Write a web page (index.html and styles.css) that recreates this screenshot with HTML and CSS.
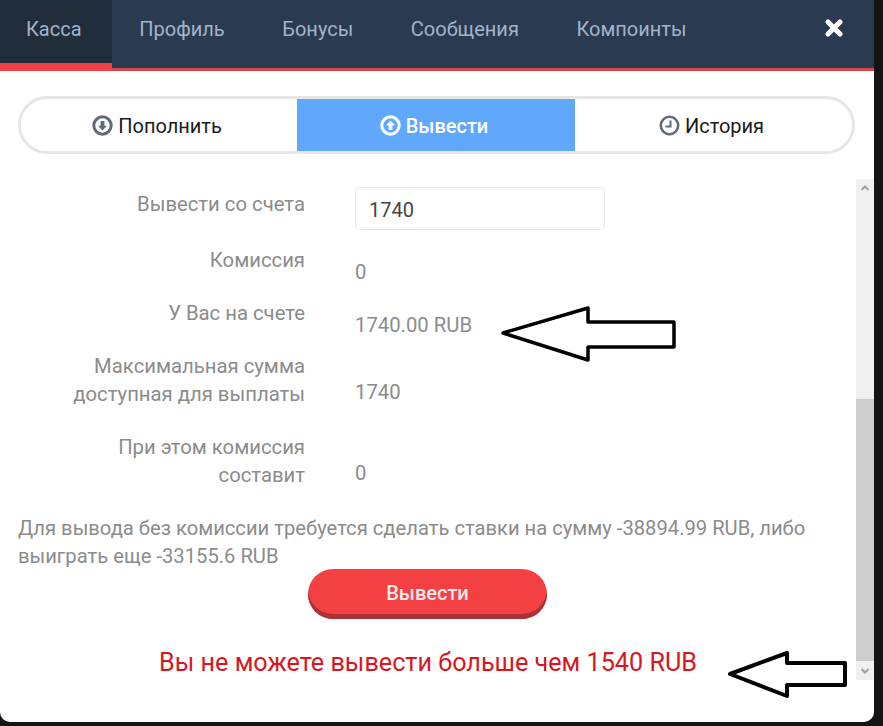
FILE: index.html
```html
<!DOCTYPE html>
<html lang="ru">
<head>
  <meta charset="UTF-8">
  <title>Касса</title>
  <link rel="stylesheet" href="styles.css">
</head>
<body>

<div class="modal">
  <div class="modal-head">
    <a class="head-tab active">Касса</a>
    <a class="head-tab">Профиль</a>
    <a class="head-tab">Бонусы</a>
    <a class="head-tab">Сообщения</a>
    <a class="head-tab">Компоинты</a>
    <svg class="close-icon" width="18" height="18" viewBox="0 0 18 18">
      <path d="M3 3 L15 15 M15 3 L3 15" stroke="#fff" stroke-width="5" stroke-linecap="round"/>
    </svg>
  </div>

  <div class="switcher">
    <div class="switch-item">
      <svg class="switch-icon" width="21" height="21" viewBox="0 0 21 21">
        <circle cx="10.5" cy="10.5" r="8.7" fill="none" stroke="#5f6b78" stroke-width="3"/>
        <path d="M10.5 15.6 L6 10.8 H8.6 V6 H12.4 V10.8 H15 Z" fill="#5f6b78"/>
      </svg>
      <span class="switch-text">Пополнить</span>
    </div>
    <div class="switch-item current">
      <svg class="switch-icon" width="21" height="21" viewBox="0 0 21 21">
        <circle cx="10.5" cy="10.5" r="8.7" fill="none" stroke="#fff" stroke-width="3"/>
        <path d="M10.5 5.4 L15 10.2 H12.4 V15 H8.6 V10.2 H6 Z" fill="#fff"/>
      </svg>
      <span class="switch-text">Вывести</span>
    </div>
    <div class="switch-item">
      <svg class="switch-icon" width="21" height="21" viewBox="0 0 21 21">
        <circle cx="10.5" cy="10.5" r="8.7" fill="none" stroke="#5f6b78" stroke-width="2.6"/>
        <path d="M11.5 5.5 V11.5 H6.5" fill="none" stroke="#5f6b78" stroke-width="2"/>
      </svg>
      <span class="switch-text">История</span>
    </div>
  </div>

  <div class="scroll-wrap">
    <div class="scroll-content">
      <div class="form-row first">
        <div class="form-label">Вывести со счета</div>
        <input class="amount-input" type="text" value="1740">
      </div>
      <div class="form-row">
        <div class="form-label">Комиссия</div>
        <div class="form-value">0</div>
      </div>
      <div class="form-row">
        <div class="form-label">У Вас на счете</div>
        <div class="form-value">1740.00 RUB</div>
      </div>
      <div class="form-row tall">
        <div class="form-label">Максимальная сумма доступная для выплаты</div>
        <div class="form-value">1740</div>
      </div>
      <div class="form-row tall">
        <div class="form-label">При этом комиссия составит</div>
        <div class="form-value">0</div>
      </div>
      <p class="note">Для вывода без комиссии требуется сделать ставки на сумму -38894.99 RUB, либо выиграть еще -33155.6 RUB</p>
      <button class="submit-btn" type="button">Вывести</button>
      <div class="error-text">Вы не можете вывести больше чем 1540 RUB</div>
    </div>

    <div class="scrollbar">
      <svg class="scroll-arrow" width="18" height="19" viewBox="0 0 18 19">
        <path d="M5.5 11 L9 7.5 L12.5 11" fill="none" stroke="#a0a0a0" stroke-width="2"/>
      </svg>
      <div class="scroll-space"></div>
      <div class="scroll-thumb"></div>
      <svg class="scroll-arrow" width="18" height="19" viewBox="0 0 18 19">
        <path d="M5.5 8 L9 11.5 L12.5 8" fill="none" stroke="#a0a0a0" stroke-width="2"/>
      </svg>
    </div>
  </div>

  <!-- arrows drawn on top of the screenshot -->
  <svg class="marks" width="883" height="726" viewBox="0 0 883 726">
    <polygon points="503,333 588,308 588,322 674,322 674,347 588,347 588,360" fill="none" stroke="#000" stroke-width="3.5" stroke-linejoin="round"/>
    <polygon points="730,674 787,653 787,663 845,663 845,685 787,685 787,696" fill="none" stroke="#000" stroke-width="4" stroke-linejoin="round"/>
  </svg>
</div>

</body>
</html>
```

FILE: styles.css
```css
html, body {
  margin: 0;
  height: 100%;
}

body {
  background-color: #141414;
  font-family: Roboto, "Liberation Sans", sans-serif;
  overflow: hidden;
}

.modal {
  position: relative;
  width: 874px;
  height: 722px;
  background-color: #fff;
  border-radius: 0 0 10px 10px;
}

.modal-head {
  display: flex;
  height: 68px;
  background-color: #2a3a50;
  border-bottom: 3px solid #d5494e;
  font-size: 20px;
}

.head-tab {
  padding: 19px 28.8px 0;
  color: #a3b3c9;
  line-height: 21px;
}

.head-tab.active {
  height: 44px;
  padding-left: 26px;
  padding-right: 30px;
  margin-right: -1px;
  background-color: #222d3c;
  border-bottom: 8px solid #f04246;
}

.close-icon {
  margin: 19px 31px 0 auto;
}

.switcher {
  display: grid;
  grid-template-columns: 276px 278px 1fr;
  height: 52px;
  margin: 25px 19px 25px 18px;
  border: 3px solid #e6e6e6;
  border-radius: 29px;
  overflow: hidden;
  font-size: 20px;
  color: #1a1a1a;
}

.switch-item {
  display: flex;
  justify-content: center;
  align-items: center;
  gap: 5px;
  padding-right: 4px;
}

.switch-text {
  padding-top: 2px;
}

.switch-item.current {
  background-color: #60a8fb;
  color: #fff;
  font-weight: 500;
}

.scroll-wrap {
  display: flex;
  height: 501px;
}

.scroll-content {
  flex: 1;
  padding: 8px 18px 0;
  font-size: 20.3px;
  line-height: 28px;
  color: #8b8b8b;
}

.form-row {
  display: grid;
  grid-template-columns: 287px 1fr;
  column-gap: 50px;
  min-height: 40px;
  margin-bottom: 13px;
}

.form-row.first {
  margin-bottom: 16px;
}

.form-row.tall {
  min-height: 68px;
}

.form-label {
  padding-left: 30px;
  text-align: right;
}

.first .form-label {
  padding-top: 3px;
}

.form-value {
  padding-top: 12px;
}

.tall .form-value {
  padding-top: 26px;
}

.amount-input {
  box-sizing: border-box;
  width: 250px;
  height: 43px;
  padding: 2px 13px 0;
  border: 1px solid #e8e8e8;
  border-radius: 4px;
  font-family: inherit;
  font-size: 20px;
  color: #444;
}

.note {
  margin: 0 0 -1px;
  font-size: 20.2px;
}

.submit-btn {
  display: block;
  width: 239px;
  height: 50px;
  margin: 0 0 0 290px;
  padding: 0 0 2px;
  background-color: #f24043;
  border: none;
  border-radius: 25px;
  box-shadow: inset 0 -5px 0 #a83235;
  font-family: inherit;
  font-size: 20px;
  font-weight: 500;
  color: #fbe9ea;
}

.error-text {
  margin-top: 30px;
  text-align: center;
  font-size: 25.2px;
  color: #d8161e;
}

.scrollbar {
  display: flex;
  flex-direction: column;
  width: 18px;
  background-color: #f0f0f0;
}

.scroll-arrow {
  display: block;
  flex: none;
}

.scroll-space {
  flex: 1;
}

.scroll-thumb {
  height: 262px;
  background-color: #cdcdcd;
}

.marks {
  position: absolute;
  left: 0;
  top: 0;
  pointer-events: none;
}
```
